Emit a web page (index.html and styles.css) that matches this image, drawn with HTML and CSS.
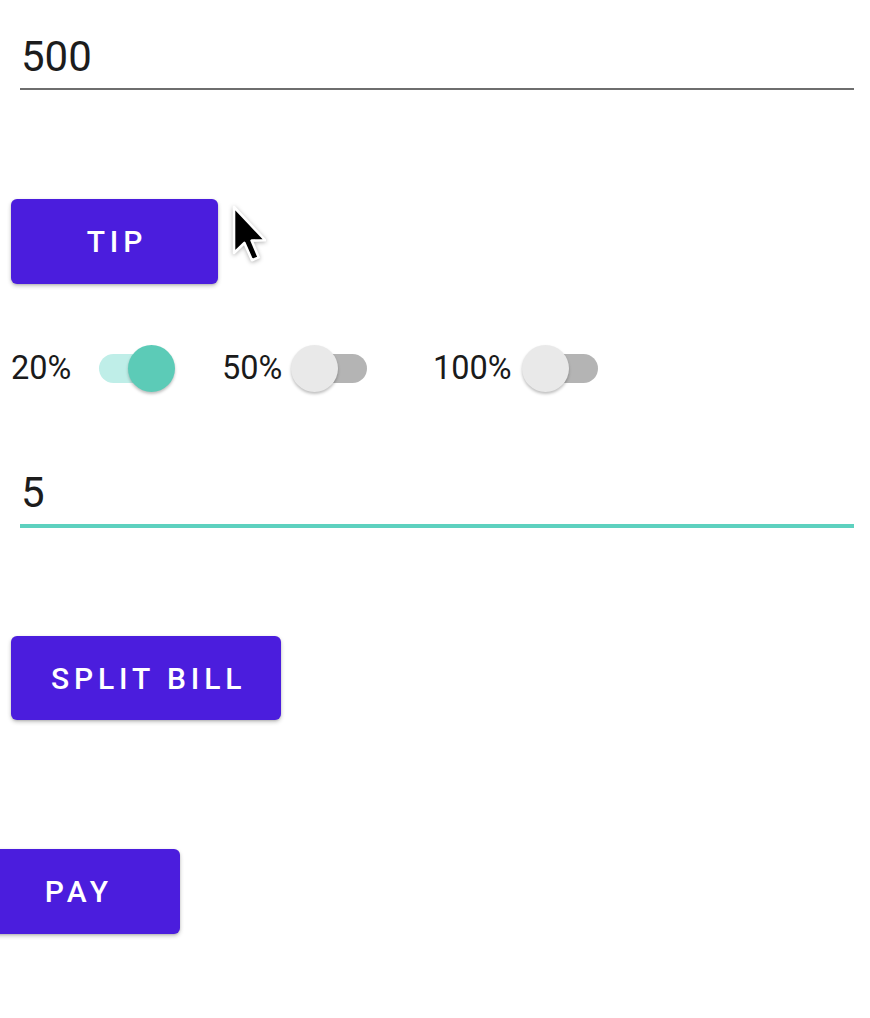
FILE: index.html
```html
<!DOCTYPE html>
<html>
<head>
<meta charset="utf-8">
<link rel="stylesheet" href="styles.css">
</head>
<body>
<main class="screen">
  <div class="field field--plain"><span class="field__value">500</span></div>

  <div class="btn-wrap btn-wrap--tip">
    <button class="btn">TIP</button>
    <svg class="cursor" width="34" height="58" viewBox="0 0 17 29" xmlns="http://www.w3.org/2000/svg">
      <path d="M1 1 L1 24 L6.2 19 L10 27.6 L13.4 26.2 L9.8 17.8 L16.6 17.6 Z" fill="#000" stroke="#fff" stroke-width="1.3" stroke-linejoin="round"/>
    </svg>
  </div>

  <div class="toggles">
    <div class="toggle">
      <span class="toggle__label">20%</span>
      <span class="switch switch--on switch--a"><span class="switch__thumb"></span></span>
    </div>
    <div class="toggle">
      <span class="toggle__label">50%</span>
      <span class="switch switch--b"><span class="switch__thumb"></span></span>
    </div>
    <div class="toggle">
      <span class="toggle__label">100%</span>
      <span class="switch switch--c"><span class="switch__thumb"></span></span>
    </div>
  </div>

  <div class="field field--focused"><span class="field__value">5</span></div>

  <button class="btn btn--split">SPLIT BILL</button>

  <button class="btn btn--pay">PAY</button>
</main>
</body>
</html>
```

FILE: styles.css
```css
* { box-sizing: border-box; }

html, body {
  margin: 0;
  padding: 0;
  background: #ffffff;
}

body {
  font-family: Roboto, "Noto Sans", "Liberation Sans", sans-serif;
  color: #1a1a1a;
  width: 870px;
  height: 1018px;
  overflow: hidden;
}

.screen {
  display: flex;
  flex-direction: column;
  align-items: flex-start;
  padding-left: 11px;
}

.field {
  align-self: stretch;
  margin-left: 9px;
  margin-right: 16px;
  padding-left: 1px;
  font-size: 42px;
  line-height: 52px;
  padding-bottom: 5px;
}

.field--plain {
  margin-top: 31px;
  border-bottom: 2px solid #6e6e6e;
}

.field--focused {
  margin-top: 75px;
  border-bottom: 4px solid #5dd1bf;
}

.field__value {
  color: #1c1c1c;
}

.btn-wrap {
  position: relative;
}

.btn-wrap--tip {
  margin-top: 109px;
}

.btn {
  display: block;
  min-width: 207px;
  height: 85px;
  padding: 0 35px;
  border: none;
  border-radius: 6px;
  background: #4b1ddd;
  color: #ffffff;
  font-family: Roboto, "Noto Sans", "Liberation Sans", sans-serif;
  font-weight: 500;
  font-size: 30px;
  letter-spacing: 4.9px;
  text-indent: 4.9px;
  box-shadow: 0 2px 4px rgba(0, 0, 0, 0.22), 0 1px 2px rgba(0, 0, 0, 0.12);
}

.btn--split {
  margin-top: 108px;
  height: 84px;
}

.btn--pay {
  margin-top: 129px;
  margin-left: -38px;
}

.cursor {
  position: absolute;
  left: 221px;
  top: 6px;
  filter: drop-shadow(0 1px 2px rgba(0, 0, 0, 0.3));
}

.toggles {
  margin-top: 60px;
  display: grid;
  grid-template-columns: repeat(3, 211px);
  height: 48px;
}

.toggle {
  display: flex;
  align-items: center;
}

.toggle__label {
  font-size: 32.5px;
  line-height: 40px;
  color: #1a1a1a;
}

.switch {
  position: relative;
  display: block;
  width: 70px;
  height: 29px;
  border-radius: 15px;
  background: #b4b4b4;
}

.switch--a { margin-left: 28px; }
.switch--b { margin-left: 15px; }
.switch--c { margin-left: 16px; }

.switch__thumb {
  position: absolute;
  top: -9px;
  left: -6px;
  width: 47px;
  height: 47px;
  border-radius: 50%;
  background: #e9e9e9;
  box-shadow: 0 2px 3px rgba(0, 0, 0, 0.25);
}

.switch--on {
  background: #bfeee8;
}

.switch--on .switch__thumb {
  left: auto;
  right: -6px;
  background: #5ccbb7;
}
```
